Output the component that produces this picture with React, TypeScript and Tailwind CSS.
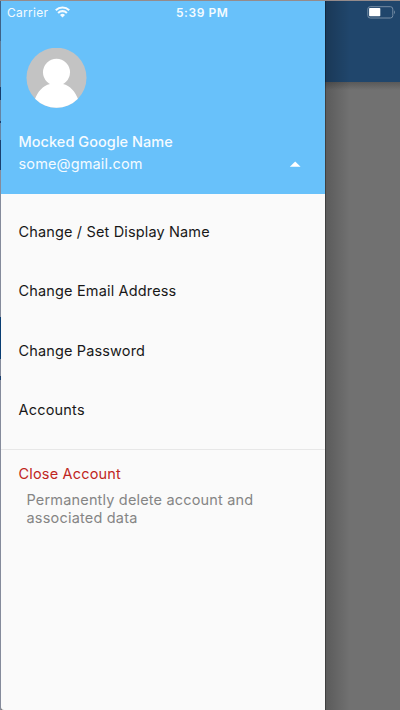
import React from "react";

const menu = [
  { label: "Change / Set Display Name", spacing: "tracking-[0.15px]" },
  { label: "Change Email Address", spacing: "tracking-[0.16px]" },
  { label: "Change Password", spacing: "tracking-[0.14px]" },
  { label: "Accounts", spacing: "tracking-[0.2px]" },
];

function WifiIcon() {
  return (
    <svg width="15" height="12" viewBox="0 0 15 12" fill="none" stroke="#f4fbff" strokeWidth="2.1">
      <path d="M0.8 4.2 A9.5 9.5 0 0 1 14.2 4.2" />
      <path d="M3.1 6.9 A6.3 6.3 0 0 1 11.9 6.9" />
      <path d="M5 9 A3.5 3.5 0 0 1 10 9 L7.5 11.5 Z" fill="#f4fbff" stroke="none" />
    </svg>
  );
}

function BatteryIcon() {
  return (
    <svg width="29" height="13" viewBox="0 0 29 13" fill="none">
      <rect x="0.8" y="0.7" width="25" height="11.3" rx="2.4" stroke="#768da5" strokeWidth="1" />
      <rect x="2.1" y="2" width="11.2" height="8.3" rx="0.8" fill="#fff" />
      <path d="M27 4.3 Q28.9 6.3 27 8.3 Z" fill="#768da5" />
    </svg>
  );
}

function Avatar() {
  return (
    <svg className="ml-[25px] mt-[47px] block" width="61" height="61" viewBox="0 0 61 61">
      <defs>
        <clipPath id="avatar">
          <circle cx="30.5" cy="29.7" r="30" />
        </clipPath>
      </defs>
      <g clipPath="url(#avatar)">
        <rect width="61" height="61" fill="#c3c3c3" />
        <circle cx="30.5" cy="24.2" r="13.5" fill="#fff" />
        <path d="M24 32 H37 V36 C44 37.5 49.5 44 52 51 V61 H9 V51 C11.5 44 17 37.5 24 36 Z" fill="#fff" />
      </g>
    </svg>
  );
}

export default function App() {
  return (
    <div className="relative flex h-[710px] w-[400px] flex-col overflow-hidden bg-[#717171] font-['Inter',sans-serif]">
      <div className="h-px shrink-0 bg-[#958b8b]" />
      <div className="flex min-h-0 flex-1">
        <div className="flex w-px flex-col bg-[#858b9b]">
          <div className="h-[40px] bg-[#3d6287]" />
          <div className="h-[46px] bg-[#5d7c9a]" />
          <div className="h-[13px] bg-[#173e6d]" />
          <div className="h-[21px] bg-[#6484a4]" />
          <div className="h-[2px] bg-[#173e6d]" />
          <div className="h-[17px] bg-[#6484a4]" />
          <div className="h-[30px] bg-[#19406f]" />
          <div className="h-[147px]" />
          <div className="h-[42px] bg-[#093d73]" />
          <div className="h-[17px]" />
          <div className="h-[4px] bg-[#193f70]" />
        </div>
        <aside className="flex w-[324px] flex-col rounded-bl-[3px] bg-[#fafafa]">
          <header className="h-[193px] bg-[#68c1fa] text-[#f5fbff]">
            <Avatar />
            <div className="ml-[17.5px] mt-[22px] h-[22px] whitespace-nowrap text-[14.5px] font-medium leading-[22px] tracking-[0.05px]">
              <span>Mocked Google Name</span>
            </div>
            <div className="ml-[17.5px] mr-[24px] flex h-[22px] items-center justify-between text-[14.5px] leading-[22px] tracking-[0.14px]">
              <span>some@gmail.com</span>
              <svg width="12" height="7" viewBox="0 0 12 7">
                <path d="M0.8 5.7 L6.2 0.5 L11.6 5.7 Z" fill="#fff" />
              </svg>
            </div>
          </header>
          <nav className="h-[255px] pt-[7.6px] text-[#181818]">
            {menu.map((item) => (
              <div key={item.label} className="flex h-[59.6px] items-center whitespace-nowrap pl-[17.5px] text-[14.5px]">
                <span className={item.spacing}>{item.label}</span>
              </div>
            ))}
          </nav>
          <section className="border-t border-[#e7e7e7] pl-[17.5px] pt-[14px]">
            <div className="h-[20px] text-[14.5px] leading-[20px] tracking-[0.18px] text-[#c02622]"><span>Close Account</span></div>
            <div className="ml-[8px] mt-[7px] whitespace-nowrap text-[14.5px] leading-[18px] tracking-[0.17px] text-[#858585]">
              <span>Permanently delete account and</span>
              <br />
              <span className="tracking-[0.2px]">associated data</span>
            </div>
          </section>
        </aside>
        <main className="flex w-[75px] flex-col">
          <div className="h-[81px] bg-[#20466c]" />
          <div className="h-[8px] bg-linear-to-b from-[#595959] to-[#717171]" />
        </main>
      </div>
      <div className="absolute bottom-0 left-[325px] top-px w-[25px] bg-linear-to-r from-black/20 to-transparent" />
      <div className="absolute bottom-0 left-[325px] top-px w-px bg-black/30" />
      <div className="absolute inset-x-0 top-0 h-[24px] text-[#f4fbff]">
        <div className="absolute left-[7px] top-[4px] flex items-start">
          <span className="text-[12px] leading-[17px] tracking-[0.28px]">Carrier</span>
        </div>
        <div className="absolute left-[55px] top-[5.6px]"><WifiIcon /></div>
        <div className="absolute left-[176px] top-[4px] whitespace-nowrap text-[12px] font-semibold leading-[17px] tracking-[0.55px]"><span>5:39 PM</span></div>
        <div className="absolute left-[367px] top-[6px]"><BatteryIcon /></div>
      </div>
    </div>
  );
}
